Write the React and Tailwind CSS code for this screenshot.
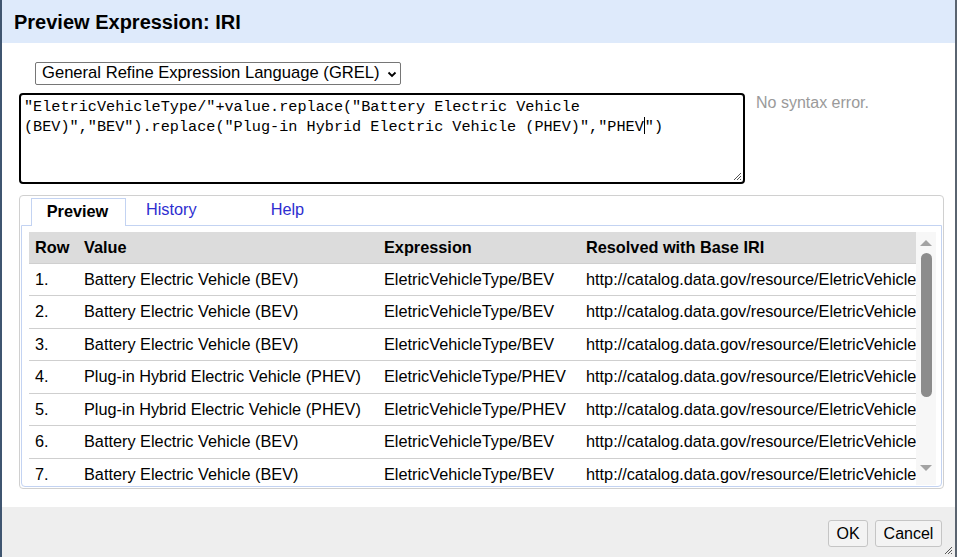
import React from 'react';

const rows = [
  ['1.', 'Battery Electric Vehicle (BEV)', 'BEV'],
  ['2.', 'Battery Electric Vehicle (BEV)', 'BEV'],
  ['3.', 'Battery Electric Vehicle (BEV)', 'BEV'],
  ['4.', 'Plug-in Hybrid Electric Vehicle (PHEV)', 'PHEV'],
  ['5.', 'Plug-in Hybrid Electric Vehicle (PHEV)', 'PHEV'],
  ['6.', 'Battery Electric Vehicle (BEV)', 'BEV'],
  ['7.', 'Battery Electric Vehicle (BEV)', 'BEV'],
  ['8.', 'Battery Electric Vehicle (BEV)', 'BEV'],
  ['9.', 'Plug-in Hybrid Electric Vehicle (PHEV)', 'PHEV'],
];

function Grip() {
  return (
    <svg width="10" height="10" viewBox="0 0 10 10" className="block">
      <path d="M9 2 L2 9 M9 5 L5 9 M9 8 L8 9" stroke="#555" strokeWidth="1" fill="none" />
    </svg>
  );
}

export default function App() {
  return (
    <div
      className="w-[957px] h-[557px] flex flex-col border-l-2 border-r-2 border-l-[#3f5570] border-r-[#5a6470] bg-white overflow-hidden"
      style={{ fontFamily: '"Liberation Sans", Arial, sans-serif' }}
    >
      {/* title bar */}
      <div className="h-[43px] shrink-0 bg-[#deeafb] flex items-center pl-[12px]">
        <h1 className="text-[20px] font-bold text-black leading-none">Preview Expression: IRI</h1>
      </div>

      {/* body */}
      <div className="flex-1 flex flex-col pl-[17px] pr-[12px] pt-[19px]">
        <div className="pl-[16px]">
          <div className="w-[366px] h-[23px] border border-[#767676] rounded-[2px] flex items-center justify-between pl-[6px] pr-[2px] text-[16.6px] text-black whitespace-nowrap">
            <span>General Refine Expression Language (GREL)</span>
            <svg width="12" height="12" viewBox="0 0 12 12" className="shrink-0">
              <path d="M2.5 4.5 L6 8 L9.5 4.5" stroke="#000" strokeWidth="1.8" fill="none" />
            </svg>
          </div>
        </div>

        <div className="flex mt-[8px]">
          <div className="relative w-[726px] h-[91px] border-2 border-black rounded-[4px] pl-[3px] pt-[2px]">
            <div
              className="text-[15.2px] leading-[20px] text-black whitespace-pre-wrap break-words pr-[4px]"
              style={{ fontFamily: '"Liberation Mono", "DejaVu Sans Mono", monospace' }}
            >
              {'"EletricVehicleType/"+value.replace("Battery Electric Vehicle (BEV)","BEV").replace("Plug-in Hybrid Electric Vehicle (PHEV)","PHEV'}
              <span className="inline-block w-px h-[17px] bg-black align-middle -mt-[2px]"></span>
              {'")'}
            </div>
            <div className="absolute right-[1px] bottom-[1px]">
              <Grip />
            </div>
          </div>
          <div className="ml-[11px] pt-[1px] text-[16px] text-[#9a9a9a] leading-[18px]">No syntax error.</div>
        </div>

        {/* tabs */}
        <div className="mt-[11px] w-[925px] h-[294px] border border-[#d0d0d0] rounded-[4px] p-px flex flex-col">
          <div className="flex items-end h-[28px] pl-[10px] text-[16.3px]">
            <div className="h-[28px] w-[95px] border border-b-0 border-[#c3d3f2] bg-white flex items-center justify-center pb-[3px] pr-[2px] font-bold text-black relative top-px">
              Preview
            </div>
            <div className="h-[28px] flex items-center pb-[3px] pl-[20px] text-[#2e2ed0]">History</div>
            <div className="h-[28px] flex items-center pb-[3px] pl-[74px] text-[#2e2ed0]">Help</div>
          </div>
          <div className="flex-1 border border-[#c3d3f2] rounded-b-[4px] pt-[6px] pl-[7px] pr-[5px] overflow-hidden">
            <div className="flex h-[253px]">
              <div className="w-[888px] overflow-hidden">
                <table className="w-[888px] table-fixed border-collapse text-[16.3px] text-black">
                  <colgroup>
                    <col className="w-[49px]" />
                    <col className="w-[300px]" />
                    <col className="w-[202px]" />
                    <col />
                  </colgroup>
                  <thead>
                    <tr className="bg-[#dcdcdc] h-[31px]">
                      <th className="text-left font-bold pl-[6px] pb-px">Row</th>
                      <th className="text-left font-bold pl-[6px] pb-px">Value</th>
                      <th className="text-left font-bold pl-[6px] pb-px">Expression</th>
                      <th className="text-left font-bold pl-[6px] pb-px">Resolved with Base IRI</th>
                    </tr>
                  </thead>
                  <tbody>
                    {rows.map((r) => (
                      <tr key={r[0]} className="h-[32.5px] border-t border-[#cfcfcf]">
                        <td className="pl-[6px] pb-px whitespace-nowrap">{r[0]}</td>
                        <td className="pl-[6px] pb-px whitespace-nowrap">{r[1]}</td>
                        <td className="pl-[6px] pb-px whitespace-nowrap">EletricVehicleType/{r[2]}</td>
                        <td className="pl-[6px] pb-px whitespace-nowrap overflow-hidden">
                          http://catalog.data.gov/resource/EletricVehicleType/{r[2]}
                        </td>
                      </tr>
                    ))}
                  </tbody>
                </table>
              </div>
              <div className="w-[20px] bg-[#f7f7f7] flex flex-col items-center">
                <svg width="14" height="10" viewBox="0 0 14 10" className="mt-[6px]">
                  <path d="M1 8 L7 2 L13 8 Z" fill="#a3a3a3" />
                </svg>
                <div className="mt-[5px] w-[11px] h-[144px] rounded-full bg-[#8c8c8c]"></div>
                <div className="flex-1"></div>
                <svg width="14" height="10" viewBox="0 0 14 10" className="mb-[12px]">
                  <path d="M1 2 L7 8 L13 2 Z" fill="#a3a3a3" />
                </svg>
              </div>
            </div>
          </div>
        </div>
      </div>

      {/* footer */}
      <div className="relative h-[50px] shrink-0 bg-[#eeeeee] flex justify-end items-start pt-[13px] pr-[13px] gap-[7px] text-[16px]">
        <button className="h-[27px] w-[40px] bg-[#f3f3f3] border border-[#c5c5c5] rounded-[3px] text-black">OK</button>
        <button className="h-[27px] w-[67px] bg-[#f3f3f3] border border-[#c5c5c5] rounded-[3px] text-black">Cancel</button>
        <div className="absolute right-[2px] bottom-[2px]">
          <Grip />
        </div>
      </div>
    </div>
  );
}
